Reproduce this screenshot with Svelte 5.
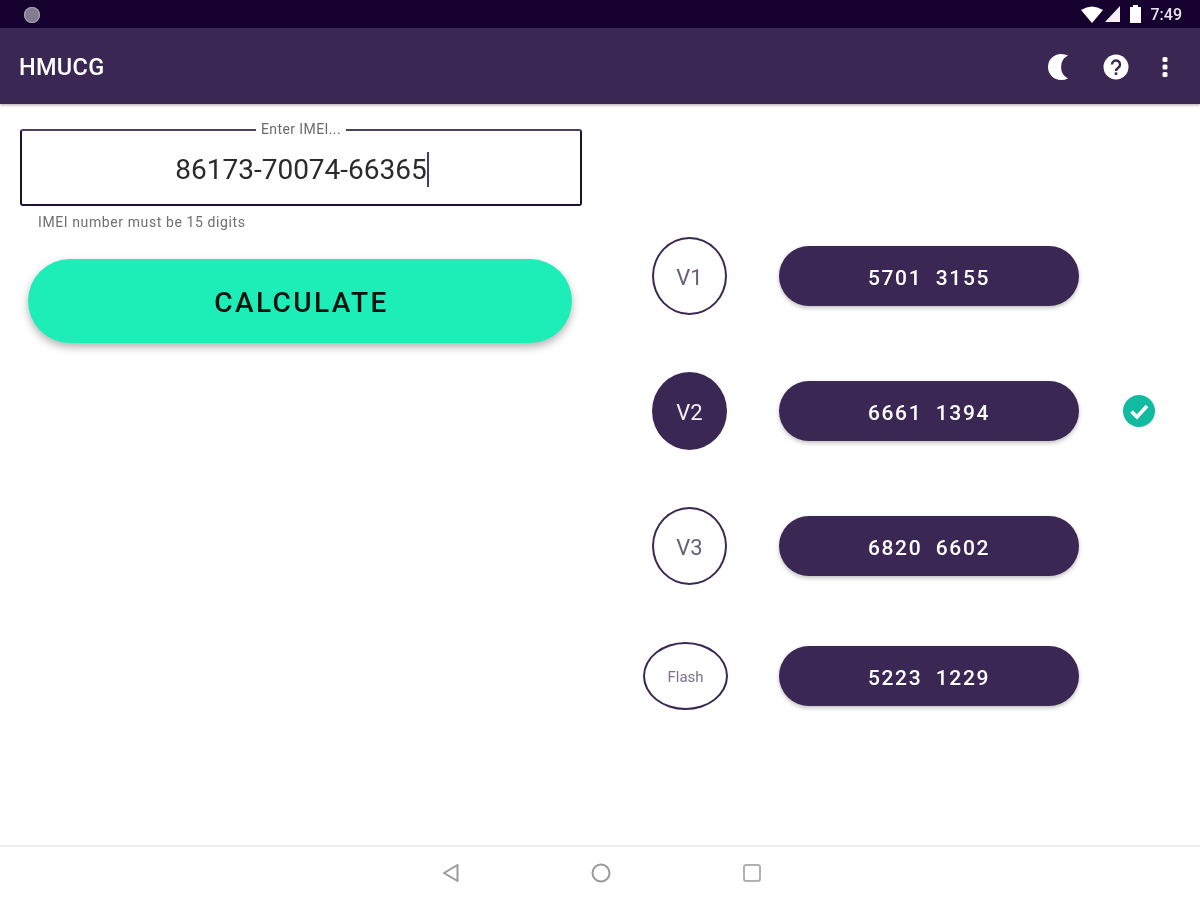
<script>
	const rows = [
		{ label: 'V1', code: '5701  3155' },
		{ label: 'V2', code: '6661  1394', active: true },
		{ label: 'V3', code: '6820  6602' },
		{ label: 'Flash', code: '5223  1229', flash: true }
	];
</script>

<div class="screen">
	<div class="status-bar">
		<span class="notif-dot"></span>
		<div class="status-right">
			<svg class="wifi" width="22" height="17" viewBox="0 0 22 17"><path d="M0 4 Q11 -3 22 4 L11 17Z" fill="#fff" /></svg>
			<svg class="signal" width="15" height="16" viewBox="0 0 15 16"><path d="M0 16 L15 0 V16Z" fill="#f4f2f6" /></svg>
			<svg class="battery" width="11" height="18" viewBox="0 0 11 18"><path d="M3 0 H8 V2 H11 V18 H0 V2 H3Z" fill="#fff" /></svg>
			<span class="clock">7:49</span>
		</div>
	</div>

	<header class="app-bar">
		<h1>HMUCG</h1>
		<div class="actions">
			<svg class="moon" width="20" height="26" viewBox="0 0 20 26"><path d="M13 0 A13 13 0 1 0 13 26 Q17 26 20 24.5 A13 13 0 0 1 20 1.5 Q17 0 13 0Z" fill="#fff" /></svg>
			<svg class="help" width="26" height="26" viewBox="0 0 26 26">
				<circle cx="13" cy="13" r="12.5" fill="#fff" />
				<path d="M9 10.5 A4 4 0 1 1 15.2 13.8 C13.8 14.8 13 15.4 13 17" fill="none" stroke="#3b2753" stroke-width="2.4" />
				<rect x="11.7" y="18.4" width="2.6" height="2.6" fill="#3b2753" />
			</svg>
			<svg class="dots" width="6" height="20" viewBox="0 0 6 20">
				<rect x="0.5" y="0" width="5" height="5" rx="1.5" fill="#fff" />
				<rect x="0.5" y="7.5" width="5" height="5" rx="1.5" fill="#fff" />
				<rect x="0.5" y="15" width="5" height="5" rx="1.5" fill="#fff" />
			</svg>
		</div>
	</header>

	<main class="content">
		<section class="left">
			<fieldset class="imei-box">
				<legend>Enter IMEI...</legend>
				<div class="imei-value">86173-70074-66365<span class="caret"></span></div>
			</fieldset>
			<p class="helper">IMEI number must be 15 digits</p>
			<button class="calc-btn">CALCULATE</button>
		</section>

		<section class="right">
			{#each rows as row}
				<div class="row" class:last={row.flash}>
					<div class="badge" class:filled={row.active} class:flash={row.flash}>{row.label}</div>
					<div class="pill">{row.code}</div>
					{#if row.active}
						<svg class="check" width="32" height="32" viewBox="0 0 32 32">
							<circle cx="16" cy="16" r="16" fill="#12bba0" />
							<path d="M8.5 16.5 L14 22 L24 11" fill="none" stroke="#fff" stroke-width="3.6" />
						</svg>
					{/if}
				</div>
			{/each}
		</section>
	</main>

	<nav class="nav-bar">
		<svg width="18" height="20" viewBox="0 0 18 20"><path d="M2 10 L15.5 2 V18Z" fill="none" stroke="#9a9a9a" stroke-width="2" stroke-linejoin="round" /></svg>
		<svg width="20" height="20" viewBox="0 0 20 20"><circle cx="10" cy="10" r="8.5" fill="none" stroke="#9a9a9a" stroke-width="2" /></svg>
		<svg class="recents" width="18" height="18" viewBox="0 0 18 18"><rect x="1" y="1" width="16" height="16" rx="2" fill="none" stroke="#b0b0b0" stroke-width="2" /></svg>
	</nav>
</div>

<style>
	:global(body) {
		margin: 0;
		background: #fff;
	}

	.screen {
		width: 1200px;
		height: 900px;
		display: flex;
		flex-direction: column;
		overflow: hidden;
		font-family: Roboto, 'Liberation Sans', sans-serif;
		filter: blur(0.55px);
	}

	.status-bar {
		height: 28px;
		flex-shrink: 0;
		background: #16002e;
		display: flex;
		align-items: center;
		justify-content: space-between;
		padding: 0 18px 0 24px;
	}

	.notif-dot {
		width: 16px;
		height: 16px;
		margin-top: 1px;
		border-radius: 50%;
		background: #837b90;
		box-shadow: inset 0 0 0 1px #a9a4b3;
	}

	.status-right {
		display: flex;
		align-items: center;
		color: #e6e3ea;
		font-size: 16px;
		font-weight: 500;
	}

	.signal {
		margin-left: 2px;
	}

	.battery {
		margin-left: 10px;
	}

	.clock {
		margin-left: 10px;
	}

	.app-bar {
		height: 76px;
		flex-shrink: 0;
		box-sizing: border-box;
		padding: 2px 32px 0 19px;
		background: #3b2753;
		display: flex;
		align-items: center;
		justify-content: space-between;
		box-shadow: 0 1px 3px rgba(0, 0, 0, 0.35);
		position: relative;
	}

	h1 {
		margin: 0;
		color: #fff;
		font-size: 23.5px;
		font-weight: 500;
		letter-spacing: 0.3px;
	}

	.actions {
		display: flex;
		align-items: center;
	}

	.help {
		margin-left: 35px;
	}

	.dots {
		margin-left: 33px;
	}

	.content {
		flex: 1;
		display: flex;
		min-height: 0;
	}

	.left {
		width: 600px;
		box-sizing: border-box;
		padding: 18px 18px 0 20px;
	}

	.imei-box {
		margin: 0;
		padding: 0;
		height: 84px;
		box-sizing: border-box;
		border: 2px solid #1d1233;
		border-top-color: #4a4060;
		border-radius: 3px;
	}

	legend {
		margin: 0 auto;
		padding: 0 5px;
		font-size: 14px;
		line-height: 15px;
		color: #6a6a6a;
		letter-spacing: 0.4px;
	}

	.imei-value {
		height: 38px;
		margin-top: 13px;
		padding-left: 2px;
		display: flex;
		align-items: center;
		justify-content: center;
		font-size: 28px;
		color: #2a2a2a;
	}

	.caret {
		width: 2px;
		height: 35px;
		background: #4a3a63;
	}

	.helper {
		margin: 8px 0 0 18px;
		font-size: 14px;
		line-height: 16px;
		color: #6f6f6f;
		letter-spacing: 0.6px;
	}

	.calc-btn {
		display: block;
		width: 544px;
		height: 84px;
		margin: 29px 0 0 8px;
		padding: 3px 0 0 3px;
		border: none;
		border-radius: 42px;
		background: #1dedb7;
		box-shadow: 0 4px 8px rgba(0, 0, 0, 0.3);
		font-family: inherit;
		font-size: 28px;
		font-weight: 500;
		letter-spacing: 2.4px;
		color: #08120f;
	}

	.right {
		flex: 1;
		padding: 133px 0 0 43px;
		display: flex;
		flex-direction: column;
		gap: 57px;
	}

	.row {
		display: flex;
		align-items: center;
		height: 78px;
	}

	.row.last {
		margin-top: -5px;
	}

	.badge {
		width: 75px;
		height: 78px;
		margin: 0 52px 0 9px;
		padding-top: 2px;
		box-sizing: border-box;
		border: 2px solid #3b2753;
		border-radius: 50%;
		display: flex;
		align-items: center;
		justify-content: center;
		font-size: 22px;
		color: #6a5d7c;
	}

	.badge.filled {
		background: #3b2753;
		color: #f2eff5;
	}

	.badge.flash {
		width: 85px;
		height: 68px;
		margin: 0 51px 0 0;
		font-size: 15px;
		color: #7d7390;
	}

	.pill {
		width: 300px;
		height: 60px;
		padding-top: 3px;
		box-sizing: border-box;
		border-radius: 30px;
		background: #3b2753;
		box-shadow: 0 2px 4px rgba(0, 0, 0, 0.25);
		display: flex;
		align-items: center;
		justify-content: center;
		white-space: pre;
		color: #fff;
		font-size: 21px;
		font-weight: 500;
		letter-spacing: 1.6px;
	}

	.check {
		margin-left: 44px;
	}

	.nav-bar {
		height: 55px;
		flex-shrink: 0;
		box-sizing: border-box;
		border-top: 2px solid #eeeeee;
		display: flex;
		align-items: center;
		justify-content: center;
		gap: 131px;
		padding: 0 0 1px 2px;
	}

	.recents {
		margin-left: 1px;
	}
</style>
